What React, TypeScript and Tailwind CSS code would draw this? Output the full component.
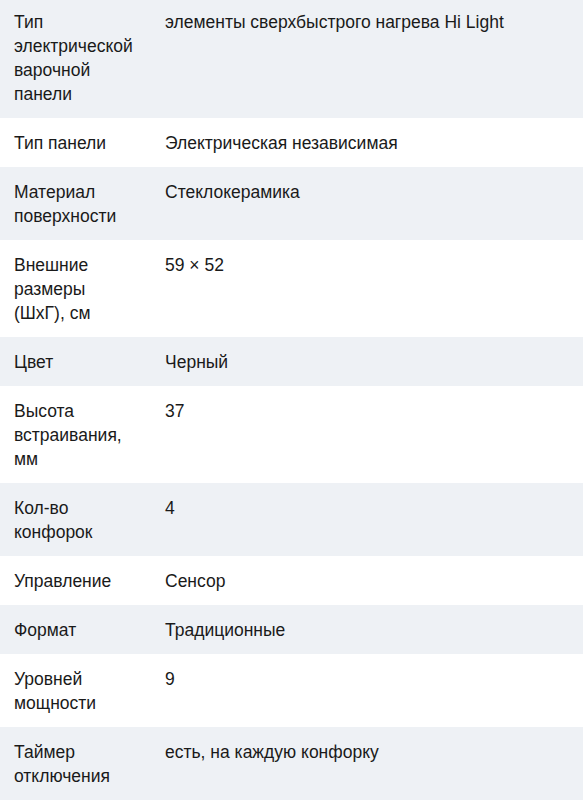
const specs: [string, string][] = [
  ['Тип электрической варочной панели', 'элементы сверхбыстрого нагрева Hi Light'],
  ['Тип панели', 'Электрическая независимая'],
  ['Материал поверхности', 'Стеклокерамика'],
  ['Внешние размеры (ШхГ), см', '59 × 52'],
  ['Цвет', 'Черный'],
  ['Высота встраивания, мм', '37'],
  ['Кол-во конфорок', '4'],
  ['Управление', 'Сенсор'],
  ['Формат', 'Традиционные'],
  ['Уровней мощности', '9'],
  ['Таймер отключения', 'есть, на каждую конфорку'],
]

export default function App() {
  return (
    <div className="w-[583px] h-[809px] overflow-hidden bg-white font-['Liberation_Sans',Arial,sans-serif] text-[17.5px] leading-[24px] text-[#1a1a1a]">
      {specs.map(([name, value], i) => (
        <div
          key={name}
          className={`grid grid-cols-[151px_1fr] pb-3 ${i === 0 ? 'pt-[10px]' : 'pt-[13px]'} ${i % 2 === 0 ? 'bg-[#eef1f5]' : 'bg-white'}`}
        >
          <div className="pl-[14px] pr-4">{name}</div>
          <div className="pl-[14px] pr-4">{value}</div>
        </div>
      ))}
    </div>
  )
}
